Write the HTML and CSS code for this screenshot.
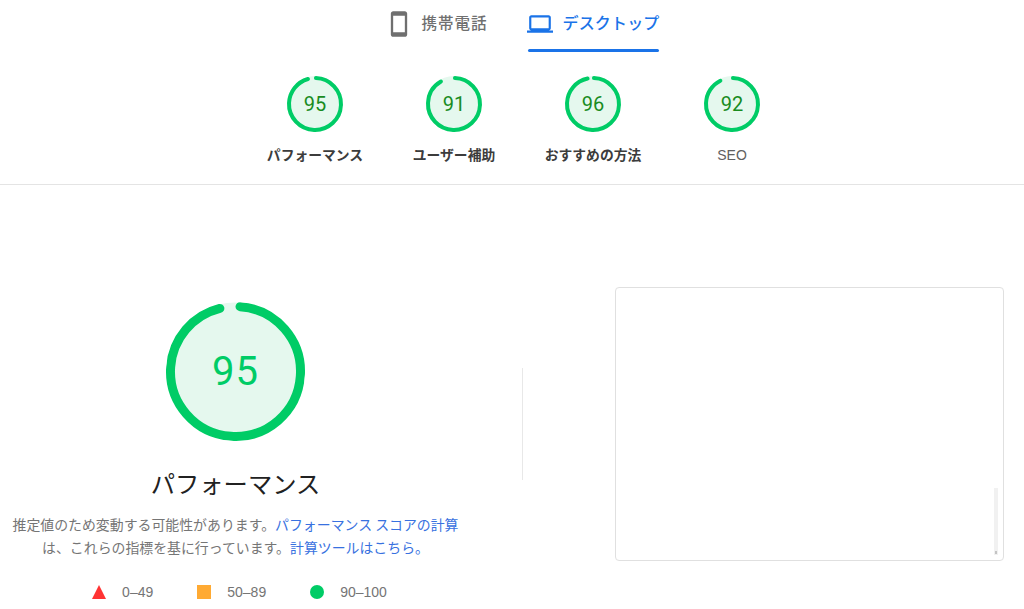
FILE: index.html
```html
<!DOCTYPE html>
<html lang="ja">
<head>
<meta charset="utf-8">
<title>PageSpeed Insights</title>
<link rel="stylesheet" href="styles.css">
</head>
<body>
<header class="header">
  <nav class="tabs">
    <div class="tab">
      <svg class="icon-phone" viewBox="0 0 24 24"><path d="M17 1.01L7 1c-1.1 0-2 .9-2 2v18c0 1.1.9 2 2 2h10c1.1 0 2-.9 2-2V3c0-1.1-.9-1.99-2-1.99zM17 19H7V5h10v14z"/></svg>
      <span class="tab-text">携帯電話</span>
    </div>
    <div class="tab tab-active">
      <svg class="icon-laptop" viewBox="0 0 24 24"><path d="M20 18c1.1 0 1.99-.9 1.99-2L22 6c0-1.1-.9-2-2-2H4c-1.1 0-2 .9-2 2v10c0 1.1.9 2 2 2H0v2h24v-2h-4zM4 6h16v10H4V6z"/></svg>
      <span class="tab-text">デスクトップ</span>
    </div>
  </nav>
  <div class="gauges">
    <div class="gauge">
      <div class="dial">
        <svg class="ring ring-small" viewBox="0 0 56 56"><circle class="ring-bg" cx="28" cy="28" r="28"/><circle class="ring-arc ring-arc-small" cx="28" cy="28" r="26" pathLength="100" stroke-dasharray="95 100"/></svg>
        <span class="dial-num">95</span>
      </div>
      <span class="gauge-label">パフォーマンス</span>
    </div>
    <div class="gauge">
      <div class="dial">
        <svg class="ring ring-small" viewBox="0 0 56 56"><circle class="ring-bg" cx="28" cy="28" r="28"/><circle class="ring-arc ring-arc-small" cx="28" cy="28" r="26" pathLength="100" stroke-dasharray="91 100"/></svg>
        <span class="dial-num">91</span>
      </div>
      <span class="gauge-label">ユーザー補助</span>
    </div>
    <div class="gauge">
      <div class="dial">
        <svg class="ring ring-small" viewBox="0 0 56 56"><circle class="ring-bg" cx="28" cy="28" r="28"/><circle class="ring-arc ring-arc-small" cx="28" cy="28" r="26" pathLength="100" stroke-dasharray="96 100"/></svg>
        <span class="dial-num">96</span>
      </div>
      <span class="gauge-label">おすすめの方法</span>
    </div>
    <div class="gauge">
      <div class="dial">
        <svg class="ring ring-small" viewBox="0 0 56 56"><circle class="ring-bg" cx="28" cy="28" r="28"/><circle class="ring-arc ring-arc-small" cx="28" cy="28" r="26" pathLength="100" stroke-dasharray="92 100"/></svg>
        <span class="dial-num">92</span>
      </div>
      <span class="gauge-label gauge-label-latin">SEO</span>
    </div>
  </div>
</header>
<main class="content">
  <section class="summary">
    <div class="big-dial">
      <svg class="ring ring-large" viewBox="0 0 139 139"><circle class="ring-bg" cx="69.5" cy="69.5" r="69"/><circle class="ring-arc ring-arc-big" cx="69.5" cy="69.5" r="65" pathLength="100" stroke-dasharray="95 100"/></svg>
      <span class="big-num">95</span>
    </div>
    <h1 class="big-title">パフォーマンス</h1>
    <p class="note">推定値のため変動する可能性があります。<a class="link">パフォーマンス スコアの計算</a>は、これらの指標を基に行っています。<a class="link">計算ツールはこちら。</a></p>
    <ul class="legend">
      <li class="legend-item"><svg class="legend-icon" viewBox="0 0 14 14"><path class="fail" d="M7 0L14 14H0z"/></svg>0–49</li>
      <li class="legend-item"><span class="legend-square"></span>50–89</li>
      <li class="legend-item"><span class="legend-dot"></span>90–100</li>
    </ul>
  </section>
  <div class="divider"></div>
  <aside class="card"><div class="scroll-thumb"></div></aside>
</main>
</body>
</html>
```
FILE: styles.css
```css
* { box-sizing: border-box; }
html, body { margin: 0; padding: 0; height: 609px; overflow: hidden; background: #fff; }
body { font-family: Roboto, "Noto Sans CJK JP", sans-serif; color: #212121; }

.header { height: 185px; border-bottom: 1px solid #e4e4e4; padding-left: 23px; display: flex; flex-direction: column; }

.tabs { display: flex; justify-content: center; gap: 40px; height: 52px; padding-left: 2px; }
.tab { display: flex; align-items: flex-start; gap: 9px; height: 52px; position: relative; padding-top: 10px; }
.tab-active { gap: 10px; }
.tab-active::after { content: ""; position: absolute; left: 0; right: 0; bottom: 0; height: 3px; border-radius: 2px; background: #1a73e8; }
.tab-text { font-family: "Noto Sans CJK JP", sans-serif; font-size: 15.5px; font-weight: 500; line-height: 24px; letter-spacing: 1px; color: #707070; }
.tab-active .tab-text { color: #1a73e8; letter-spacing: .15px; font-size: 16px; }
.icon-phone { width: 28px; height: 28px; fill: #6f6f6f; margin-left: -5px; }
.icon-laptop { width: 26px; height: 26px; fill: #1a73e8; margin: 1px 0 0 -1px; }

.gauges { display: flex; justify-content: center; margin-top: 24px; }
.gauge { width: 139px; display: flex; flex-direction: column; align-items: center; }
.dial { width: 56px; height: 56px; position: relative; display: flex; align-items: center; justify-content: center; }
.ring { position: absolute; inset: 0; width: 100%; height: 100%; }
.ring-small { transform: rotate(-87.9deg); }
.ring-large { transform: rotate(-86deg); }
.ring-bg { fill: #e5f8ee; }
.ring-arc { fill: none; stroke: #00cc66; stroke-linecap: round; }
.ring-arc-small { stroke-width: 4px; }
.ring-arc-big { stroke-width: 9px; }
.dial-num { position: relative; font-size: 20px; line-height: 24px; color: #198c1f; }
.gauge-label { margin-top: 12px; font-family: "Noto Sans CJK JP", sans-serif; font-size: 13.8px; font-weight: 700; line-height: 20px; color: #3c3c3c; white-space: nowrap; }
.gauge-label-latin { font-family: "Liberation Sans", sans-serif; font-size: 14px; font-weight: 400; line-height: 22px; color: #616161; }

.content { display: flex; align-items: flex-start; padding-top: 102px; }
.summary { width: 471px; margin-top: 15px; display: flex; flex-direction: column; align-items: center; flex: none; }
.big-dial { width: 139px; height: 139px; position: relative; display: flex; align-items: center; justify-content: center; }
.big-num { position: relative; font-size: 40px; font-weight: 400; line-height: 48px; letter-spacing: 1px; color: #00cc66; }
.big-title { margin: 24px 0 0; font-family: "Noto Sans CJK JP", sans-serif; font-size: 24.3px; font-weight: 400; line-height: 36px; color: #212121; }
.note { margin: 12px 0 0; width: 456px; text-align: center; font-family: "Noto Sans CJK JP", sans-serif; font-size: 13.9px; line-height: 23.4px; color: #757575; }
.link { color: #3871e0; }

.legend { list-style: none; margin: 22px 0 0; padding: 0 0 0 8px; display: flex; gap: 44px; }
.legend-item { display: flex; align-items: center; gap: 16px; font-family: "Liberation Sans", sans-serif; font-size: 14px; line-height: 20px; color: #757575; }
.legend-icon { width: 14px; height: 14px; }
.fail { fill: #ff3333; }
.legend-square { width: 14px; height: 14px; background: #ffaa33; }
.legend-dot { width: 14px; height: 14px; border-radius: 50%; background: #00cc66; }

.divider { width: 1px; height: 112px; margin: 81px 0 0 51px; background: #e8e8e8; flex: none; }
.card { width: 389px; height: 274px; margin-left: 92px; border: 1px solid #e0e0e0; border-radius: 4px; flex: none; display: flex; justify-content: flex-end; align-items: flex-end; padding: 0 5px 5px 0; }
.scroll-thumb { width: 4px; height: 67px; background: #f1f1f1; position: relative; }
.scroll-thumb::after { content: ""; position: absolute; left: 1px; bottom: 1px; width: 2px; height: 3px; background: #c4c4c4; }
```
